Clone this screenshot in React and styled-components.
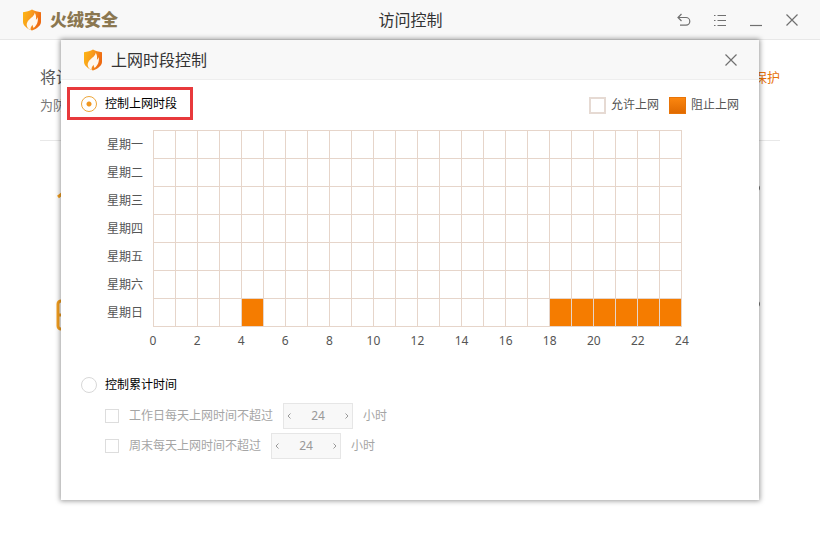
import React, { useState } from 'react'
import styled, { createGlobalStyle } from 'styled-components'

const DAYS = ['星期一', '星期二', '星期三', '星期四', '星期五', '星期六', '星期日']
const HOURS = Array.from({ length: 24 }, (_, i) => i)
const TICKS = [0, 2, 4, 6, 8, 10, 12, 14, 16, 18, 20, 22, 24]

const GlobalStyle = createGlobalStyle`
  * {
    box-sizing: border-box;
  }
  body {
    margin: 0;
    background: #fff;
    color: #555;
    font-family: 'Noto Sans', 'Noto Sans CJK SC', sans-serif;
    font-size: 12px;
    line-height: 18px;
  }
  button,
  input {
    font: inherit;
    color: inherit;
    margin: 0;
  }
`

// 盾牌图标
const Shield = ({ id }) => (
  <svg width="20" height="22" viewBox="0 0 20 22" aria-hidden="true">
    <defs>
      <linearGradient id={id} x1="0" y1="0" x2="1" y2="0.3">
        <stop offset="0" stopColor="#fdb813" />
        <stop offset="0.5" stopColor="#f89a1c" />
        <stop offset="1" stopColor="#ee6a12" />
      </linearGradient>
    </defs>
    <path d="M1 3.2C4.500 3 7.500 2 10 .6 12.500 2 15.500 3 19 3.200V13C19 16.500 15 19.600 10 21.600 5 19.600 1 16.500 1 13Z" fill={`url(#${id})`} />
    <path
      d="M12.600 3.600C13 7 8.300 9 5.800 12.200 4 14.700 4.400 17.200 6.400 19.800L8.800 21.100C8 19 9.300 17.400 10.600 15.800 10.600 17.200 11.200 18 11.600 19 14.800 16.300 16.600 12.500 15.600 8 15.200 9.400 14.700 10.200 13.900 10.900 14.400 8.300 14 5.800 12.600 3.600Z"
      fill="#fff8ee"
    />
  </svg>
)

const App = () => {
  const [mode, setMode] = useState('period')
  const [blocked, setBlocked] = useState(['6-4', '6-18', '6-19', '6-20', '6-21', '6-22', '6-23'])

  const toggle = (key) => {
    setBlocked(blocked.includes(key) ? blocked.filter((k) => k !== key) : [...blocked, key])
  }

  return (
    <>
      <GlobalStyle />
      <TitleBar>
        <Brand>
          <Shield id="shieldBrand" />
          <BrandName>火绒安全</BrandName>
        </Brand>
        <PageTitle>访问控制</PageTitle>
        <WindowButtons>
          <IconButton type="button" aria-label="返回">
            <svg width="14" height="14" viewBox="0 0 14 14">
              <path d="M4.500 1 1 4.500 4.500 8M1 4.500H9a3.800 3.800 0 0 1 0 7.600H3" />
            </svg>
          </IconButton>
          <IconButton type="button" aria-label="菜单">
            <svg width="14" height="14" viewBox="0 0 14 14">
              <path d="M1 2.500H2.500M4.500 2.500H13M1 7.500H2.500M4.500 7.500H13M1 12.500H2.500M4.500 12.500H13" />
            </svg>
          </IconButton>
          <IconButton type="button" aria-label="最小化">
            <svg width="14" height="14" viewBox="0 0 14 14">
              <path d="M1 12.500H13" />
            </svg>
          </IconButton>
          <IconButton type="button" aria-label="关闭">
            <svg width="14" height="14" viewBox="0 0 14 14">
              <path d="M1.500 1.500 12.500 12.500M12.500 1.500 1.500 12.500" />
            </svg>
          </IconButton>
        </WindowButtons>
      </TitleBar>

      <Page>
        <Intro>
          <div>
            <IntroTitle>将设</IntroTitle>
            <IntroText>为防</IntroText>
          </div>
          <ProtectLink href="#">保护</ProtectLink>
        </Intro>
        <Feature>
          <svg width="32" height="32" viewBox="0 0 32 32" aria-hidden="true">
            <path d="M2 14 16 3 30 14M7 14V29H25V14" />
          </svg>
          <Dot />
        </Feature>
        <Feature>
          <svg width="32" height="32" viewBox="0 0 32 32" aria-hidden="true">
            <rect x="2" y="2" width="28" height="28" rx="3" />
            <path d="M2 16H10" />
          </svg>
          <Dot />
        </Feature>
      </Page>

      <Dialog role="dialog" aria-labelledby="dialogTitle">
        <DialogHeader>
          <Shield id="shieldDialog" />
          <DialogTitle id="dialogTitle">上网时段控制</DialogTitle>
          <IconButton type="button" aria-label="关闭对话框">
            <svg width="14" height="14" viewBox="0 0 14 14">
              <path d="M1.500 1.500 12.500 12.500M12.500 1.500 1.500 12.500" />
            </svg>
          </IconButton>
        </DialogHeader>

        <DialogBody>
          <TopRow>
            <Highlight>
              <RadioLabel>
                <Radio type="radio" name="mode" checked={mode === 'period'} onChange={() => setMode('period')} />
                控制上网时段
              </RadioLabel>
            </Highlight>
            <Legend>
              <LegendItem>
                <Swatch />
                允许上网
              </LegendItem>
              <LegendItem>
                <Swatch $blocked />
                阻止上网
              </LegendItem>
            </Legend>
          </TopRow>

          <Schedule>
            <Table>
              <colgroup>
                <DayCol />
              </colgroup>
              <tbody>
                {DAYS.map((day, d) => (
                  <tr key={day}>
                    <DayName scope="row">{day}</DayName>
                    {HOURS.map((h) => (
                      <Slot key={h}>
                        <SlotButton
                          type="button"
                          aria-label={`${day} ${h}点`}
                          aria-pressed={blocked.includes(`${d}-${h}`)}
                          $blocked={blocked.includes(`${d}-${h}`)}
                          onClick={() => toggle(`${d}-${h}`)}
                        />
                      </Slot>
                    ))}
                  </tr>
                ))}
              </tbody>
            </Table>
            <Ticks>
              {TICKS.map((t) => (
                <Tick key={t}>{t}</Tick>
              ))}
            </Ticks>
          </Schedule>

          <Total>
            <RadioLabel>
              <Radio type="radio" name="mode" checked={mode === 'total'} onChange={() => setMode('total')} />
              控制累计时间
            </RadioLabel>
            <Limit label="工作日每天上网时间不超过" disabled={mode !== 'total'} />
            <Limit label="周末每天上网时间不超过" disabled={mode !== 'total'} />
          </Total>
        </DialogBody>
      </Dialog>
    </>
  )
}

// 每天累计时间限制
const Limit = ({ label, disabled }) => {
  const [hours, setHours] = useState(24)

  return (
    <LimitRow>
      <LimitLabel>
        <Checkbox type="checkbox" disabled={disabled} />
        {label}
      </LimitLabel>
      <Stepper>
        <StepButton type="button" aria-label="减少" disabled={disabled} onClick={() => setHours(Math.max(0, hours - 1))}>
          <svg width="4" height="6" viewBox="0 0 4 6">
            <path d="M3.500 .5 1 3 3.500 5.500" />
          </svg>
        </StepButton>
        <StepInput aria-label={label} value={hours} disabled={disabled} onChange={(e) => setHours(Number(e.target.value) || 0)} />
        <StepButton type="button" aria-label="增加" disabled={disabled} onClick={() => setHours(Math.min(24, hours + 1))}>
          <svg width="4" height="6" viewBox="0 0 4 6">
            <path d="M.5 .5 3 3 .5 5.500" />
          </svg>
        </StepButton>
      </Stepper>
      <span>小时</span>
    </LimitRow>
  )
}

const TitleBar = styled.header`
  display: grid;
  grid-template-columns: 1fr auto 1fr;
  align-items: center;
  height: 40px;
  padding: 0 21px 0 22px;
  background: #f8f8f8;
  border-bottom: 1px solid #e8e8e8;
`
const Brand = styled.div`
  display: flex;
  align-items: center;
  gap: 8px;
`
const BrandName = styled.strong`
  color: #8b7750;
  font-size: 17px;
  font-weight: 900;
  line-height: 24px;
`
const PageTitle = styled.h1`
  margin: 0;
  color: #333;
  font-size: 16px;
  font-weight: 400;
  line-height: 24px;
`
const WindowButtons = styled.div`
  display: flex;
  justify-content: flex-end;
  gap: 22px;
`
const IconButton = styled.button`
  display: flex;
  padding: 0;
  border: 0;
  background: none;

  svg {
    fill: none;
    stroke: #707070;
    stroke-width: 1.2;
  }
`
const Page = styled.main`
  padding: 0 40px;
`
const Intro = styled.section`
  display: flex;
  justify-content: space-between;
  padding: 25px 0;
  border-bottom: 1px solid #e8e8e8;
`
const IntroTitle = styled.h2`
  margin: 0 0 6px;
  font-size: 16px;
  font-weight: 400;
  line-height: 24px;
`
const IntroText = styled.p`
  margin: 0;
  color: #777;
  font-size: 13px;
  line-height: 20px;
`
const ProtectLink = styled.a`
  color: #e8730c;
  font-size: 13px;
  line-height: 24px;
  text-decoration: none;
`
const Feature = styled.div`
  display: flex;
  align-items: center;
  justify-content: space-between;
  height: 116px;
  padding: 0 20px 0 16px;

  svg {
    fill: none;
    stroke: #f5a020;
    stroke-width: 3;
  }
`
const Dot = styled.i`
  width: 6px;
  height: 6px;
  margin-bottom: 22px;
  border-radius: 50%;
  background: #777;
`
const Dialog = styled.section`
  position: absolute;
  top: 40px;
  left: 61px;
  right: 61px;
  background: #fff;
  box-shadow: 0 0 5px 1px rgba(0, 0, 0, 0.4);
`
const DialogHeader = styled.header`
  display: flex;
  align-items: center;
  gap: 8px;
  height: 40px;
  padding: 0 21px 0 22px;
  background: #f8f8f8;
  border-bottom: 1px solid #eee;
`
const DialogTitle = styled.h2`
  flex: 1;
  margin: 0;
  color: #333;
  font-size: 16px;
  font-weight: 400;
  line-height: 24px;
`
const DialogBody = styled.div`
  padding: 7px 20px 41px 6px;
`
const TopRow = styled.div`
  display: flex;
  align-items: center;
  justify-content: space-between;
`
const Highlight = styled.div`
  padding: 5px 13px 4px 11px;
  border: 3px solid #e8393c;
`
const RadioLabel = styled.label`
  display: flex;
  align-items: center;
  gap: 8px;
  color: #000;
`
const Radio = styled.input`
  appearance: none;
  width: 16px;
  height: 16px;
  border: 1px solid ${(props) => (props.checked ? '#eda63a' : '#d8d8d8')};
  border-radius: 50%;
  background: ${(props) => (props.checked ? 'radial-gradient(circle, #f0961e 2px, #fff 3px)' : '#fff')};
`
const Legend = styled.div`
  display: flex;
  gap: 10px;
  padding-top: 3px;
`
const LegendItem = styled.span`
  display: flex;
  align-items: center;
  gap: 5px;
`
const Swatch = styled.i`
  width: 17px;
  height: 17px;
  border: ${(props) => (props.$blocked ? '1px solid #e87408' : '2px solid #e6dad3')};
  background: ${(props) => (props.$blocked ? 'linear-gradient(#fb860f, #e06a00)' : '#fff')};
`
const Schedule = styled.div`
  padding: 10px 57px 0 40px;
`
const Table = styled.table`
  width: 100%;
  table-layout: fixed;
  border-collapse: collapse;
`
const DayCol = styled.col`
  width: 46px;
`
const DayName = styled.th`
  padding: 0;
  font-weight: 400;
  text-align: left;
`
const Slot = styled.td`
  height: 28px;
  padding: 0;
  border: 1px solid #e6d5ca;
`
const SlotButton = styled.button`
  display: block;
  width: 100%;
  height: 27px;
  padding: 0;
  border: 0;
  background: ${(props) => (props.$blocked ? '#f57c00' : '#fff')};
`
const Ticks = styled.div`
  display: flex;
  justify-content: space-between;
  padding: 5px 0 0 46px;
`
const Tick = styled.span`
  display: flex;
  justify-content: center;
  width: 0;
`
const Total = styled.div`
  padding: 26px 0 0 14px;
`
const LimitRow = styled.div`
  display: flex;
  align-items: center;
  gap: 10px;
  margin: 4px 0 0 24px;
  color: #a5a5a5;

  &:nth-child(2) {
    margin-top: 9px;
  }
`
const LimitLabel = styled.label`
  display: flex;
  align-items: center;
  gap: 10px;
`
const Checkbox = styled.input`
  appearance: none;
  width: 14px;
  height: 14px;
  border: 1px solid #ddd;
  background: #fff;

  &:checked {
    background: #f57c00;
  }
`
const Stepper = styled.div`
  display: flex;
  width: 70px;
  height: 26px;
  border: 1px solid #e6e6e6;
  background: #f8f8f8;
`
const StepButton = styled.button`
  display: flex;
  align-items: center;
  padding: 0 3px;
  border: 0;
  background: none;

  svg {
    fill: none;
    stroke: #999;
  }
`
const StepInput = styled.input`
  flex: 1;
  min-width: 0;
  padding: 0;
  border: 0;
  background: none;
  color: #999;
  text-align: center;
`

export default App
